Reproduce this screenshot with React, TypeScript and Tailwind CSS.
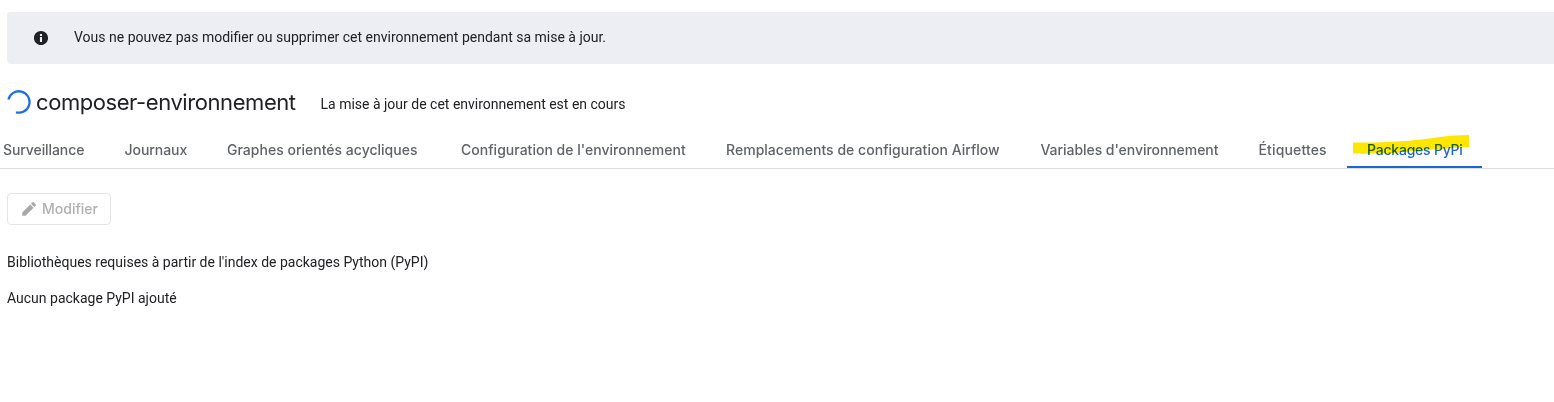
const tabs = [
  { label: "Surveillance", box: "w-[121.5px]", track: "tracking-[-0.09px]" },
  { label: "Journaux", box: "w-[102.5px]", track: "tracking-[-0.06px]" },
  { label: "Graphes orientés acycliques", box: "w-[234px]", track: "tracking-[0.01px]" },
  { label: "Configuration de l'environnement", box: "w-[265px]", track: "tracking-[0.02px]" },
  { label: "Remplacements de configuration Airflow", box: "w-[314.5px]", track: "tracking-[0.03px]" },
  { label: "Variables d'environnement", box: "w-[218px]", track: "tracking-[-0.05px]" },
  { label: "Étiquettes", box: "w-[88.5px]", track: "tracking-[0.15px]" },
];

function InfoIcon() {
  return (
    <svg className="ml-[25px] h-[18px] w-[18px] shrink-0" viewBox="0 0 24 24" fill="#202124">
      <path d="M12 2.600C6.800 2.600 2.600 6.800 2.600 12s4.200 9.400 9.400 9.400 9.400-4.200 9.400-9.400S17.200 2.600 12 2.600zm1.400 14.600h-2.800v-6.400h2.800v6.400zm0-8h-2.800V6.500h2.800v2.700z" />
    </svg>
  );
}

function Spinner() {
  return (
    <svg className="h-6 w-6 shrink-0" viewBox="0 0 24 24" fill="none">
      <path d="M1.400 9.600A10.700 10.700 0 1 1 9 22.300" stroke="#1b6fe0" strokeWidth="2.300" />
    </svg>
  );
}

function PencilIcon() {
  return (
    <svg className="h-[18px] w-[18px] shrink-0" viewBox="0 0 24 24" fill="#a8a8a8">
      <path d="M3 16.700V21h4.300L18 10.300 13.700 6 3 16.700zM20.900 7.400a1.300 1.300 0 0 0 0-1.800l-2.500-2.500a1.300 1.300 0 0 0-1.800 0l-1.900 1.900 4.300 4.300 1.900-1.900z" />
    </svg>
  );
}

export default function App() {
  return (
    <div className="h-[402px] w-full overflow-hidden bg-white pt-3 font-['Roboto',sans-serif] text-sm leading-5 text-[#202124]">
      <div className="ml-[7px] flex h-[52px] items-center rounded-l bg-[#edeef3]">
        <InfoIcon />
        <p className="mb-0.5 ml-6 whitespace-nowrap">
          Vous ne pouvez pas modifier ou supprimer cet environnement pendant sa mise à jour.
        </p>
      </div>

      <header className="mt-[26px] flex h-6 items-center pl-[7px]">
        <Spinner />
        <h1 className="ml-[5px] w-[284.5px] whitespace-nowrap font-['Inter',sans-serif] text-[22px] leading-6 tracking-[-0.43px]">
          composer-environnement
        </h1>
        <p className="mt-1 whitespace-nowrap">La mise à jour de cet environnement est en cours</p>
      </header>

      <nav className="mt-[18px] flex h-[37px] border-b border-[#dadce0] pl-[3px] font-['Inter',sans-serif] text-[14px] font-medium text-[#5f6368]">
        {tabs.map((tab) => (
          <a key={tab.label} className={`shrink-0 whitespace-nowrap pt-2 ${tab.box} ${tab.track}`}>
            {tab.label}
          </a>
        ))}
        <a className="relative h-9 w-[135px] shrink-0 whitespace-nowrap border-b-2 border-[#1967d2] pl-5 pt-2 text-[#1967d2]">
          <span className="tracking-[-0.22px]">Packages PyPi</span>
          <svg
            className="absolute left-[6px] top-[3px] h-[20px] w-[116px] mix-blend-multiply"
            viewBox="0 0 116 20"
            fill="#ffe600"
          >
            <path d="M0 7.500C32 8 58 6 80 3C92 1 104 0 116 0V12C98 13 82 14 62 16C42 18 24 19 0 18.500Z" />
          </svg>
        </a>
      </nav>

      <main className="pl-[7px] pt-6">
        <button
          disabled
          className="flex h-8 w-[104px] items-center rounded border border-[#e4e4e4] pl-3 font-['Inter',sans-serif] text-[14px] font-medium text-[#b0b0b0]"
        >
          <PencilIcon />
          <span className="ml-1">Modifier</span>
        </button>
        <p className="mt-[27px]">Bibliothèques requises à partir de l'index de packages Python (PyPI)</p>
        <p className="mt-4">Aucun package PyPI ajouté</p>
      </main>
    </div>
  );
}
